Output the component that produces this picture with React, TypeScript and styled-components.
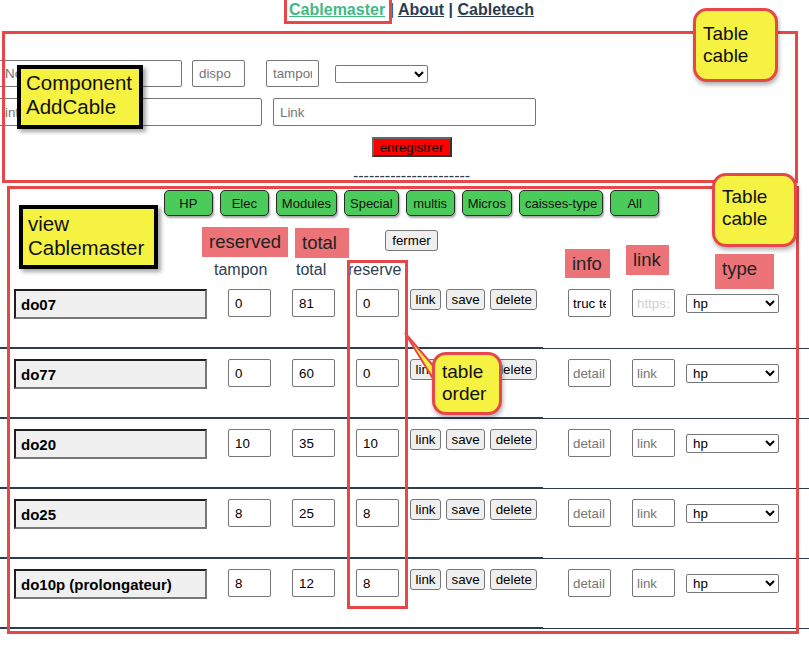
import React from 'react';
import styled, { createGlobalStyle } from 'styled-components';

const colors = {
  text: '#2c3e50',
  active: '#42b983',
  mark: '#e8474a',
  note: '#f5f242',
  tag: '#ec7478',
  filter: '#4bcb59',
  field: '#767676',
};

const GlobalStyle = createGlobalStyle`
  html, body {
    margin: 0;
    padding: 0;
    background: #fff;
  }
  body {
    font-family: 'Liberation Sans', Arial, Helvetica, sans-serif;
    color: ${colors.text};
  }
  input, select, button {
    font-family: 'Liberation Sans', Arial, Helvetica, sans-serif;
  }
`;

interface Cable {
  name: string;
  tampon: number;
  total: number;
  reserve: number;
  info?: string;
}

const cables: Cable[] = [
  { name: 'do07', tampon: 0, total: 81, reserve: 0, info: 'truc test' },
  { name: 'do77', tampon: 0, total: 60, reserve: 0 },
  { name: 'do20', tampon: 10, total: 35, reserve: 10 },
  { name: 'do25', tampon: 8, total: 25, reserve: 8 },
  { name: 'do10p (prolongateur)', tampon: 8, total: 12, reserve: 8 },
];

const filters = ['HP', 'Elec', 'Modules', 'Special', 'multis', 'Micros', 'caisses-type', 'All'];

const App = () => (
  <Page>
    <GlobalStyle />
    <Nav>
      <NavLink $active>Cablemaster</NavLink> | <NavLink>About</NavLink> | <NavLink>Cabletech</NavLink>
    </Nav>

    <AddCableForm>
      <FormRow $mt={36}>
        <Field $w={184} $h={27} $ml={-2} placeholder="Nom" />
        <Field $w={53} $h={27} $ml={10} placeholder="dispo" />
        <Field $w={53} $h={27} $ml={21} placeholder="tampon" />
        <TypeSelect $w={93} $h={18} $ml={16} defaultValue="">
          <option value="" />
          <option value="hp">hp</option>
        </TypeSelect>
      </FormRow>
      <FormRow $mt={11}>
        <Field $w={264} $h={28} $ml={-2} placeholder="info" />
        <Field $w={263} $h={28} $ml={11} placeholder="Link" />
      </FormRow>
      <Centered $mt={11}>
        <SaveButton>enregistrer</SaveButton>
      </Centered>
      <Dashes>----------------------</Dashes>
    </AddCableForm>

    <Centered $mt={5} $gap={7}>
      {filters.map((f) => (
        <FilterButton key={f}>{f}</FilterButton>
      ))}
    </Centered>
    <Centered $mt={14}>
      <GreyButton>fermer</GreyButton>
    </Centered>

    <ColumnHeads>
      <HeadLabel $w={82}>tampon</HeadLabel>
      <HeadLabel $w={52}>total</HeadLabel>
      <HeadLabel $w={60}>reserve</HeadLabel>
    </ColumnHeads>

    {cables.map((c, i) => (
      <CableRow key={c.name}>
        <MainCell>
          <NameField defaultValue={c.name} />
          <NumberField defaultValue={c.tampon} />
          <NumberField defaultValue={c.total} />
          <NumberField defaultValue={c.reserve} />
          <RowActions>
            <GreyButton $tight>link</GreyButton>
            <GreyButton $tight>save</GreyButton>
            <GreyButton $tight>delete</GreyButton>
          </RowActions>
        </MainCell>
        <ExtraCell>
          <Field $w={43} $h={28} $pad={4} defaultValue={c.info} placeholder="detail" />
          <Field $w={43} $h={28} $pad={4} $ml={21} $faint={i === 0} placeholder={i === 0 ? 'https://' : 'link'} />
          <TypeSelect $w={93} $h={19} $ml={11} $mt={5} defaultValue="hp">
            <option value="hp">hp</option>
            <option value="elec">elec</option>
          </TypeSelect>
        </ExtraCell>
      </CableRow>
    ))}

    {/* annotations drawn over the page */}
    <Outline $x={284} $y={-3} $w={108} $h={27} />
    <Outline $x={2} $y={31} $w={796} $h={152} />
    <Outline $x={7} $y={186} $w={792} $h={448} />
    <Outline $x={347} $y={260} $w={61} $h={349} />

    <Note $x={17} $y={65} $w={126} $h={64}>Component<br />AddCable</Note>
    <Note $x={19} $y={205} $w={139} $h={64} $pt={3}>view<br />Cablemaster</Note>

    <Bubble $x={693} $y={8} $w={85} $h={74} $pt={12}>Table<br />cable</Bubble>
    <Bubble $x={712} $y={173} $w={85} $h={74} $pt={10}>Table<br />cable</Bubble>

    <Pointer width="45" height="70" viewBox="0 0 45 70">
      <polygon points="5,6 36,42 37,58" fill={colors.note} stroke={colors.mark} strokeWidth="2" />
    </Pointer>
    <Bubble $x={432} $y={352} $w={70} $h={63} $pt={6}>table<br />order</Bubble>

    <Tag $x={202} $y={227} $w={86} $h={30}>reserved</Tag>
    <Tag $x={295} $y={228} $w={54} $h={30}>total</Tag>
    <Tag $x={565} $y={249} $w={45} $h={29}>info</Tag>
    <Tag $x={626} $y={245} $w={43} $h={30}>link</Tag>
    <Tag $x={715} $y={254} $w={59} $h={35}>type</Tag>
  </Page>
);

const Page = styled.div`
  position: relative;
  width: 809px;
  height: 669px;
  overflow: hidden;
`;

const Nav = styled.div`
  height: 24px;
  padding-left: 14px;
  text-align: center;
  font-size: 16px;
  line-height: 20px;
  font-weight: bold;
  color: ${colors.text};
`;

const NavLink = styled.a<{ $active?: boolean }>`
  color: ${(p) => (p.$active ? colors.active : colors.text)};
  text-decoration: underline;
`;

const AddCableForm = styled.div`
  display: flex;
  flex-direction: column;
`;

const FormRow = styled.div<{ $mt: number }>`
  display: flex;
  align-items: center;
  margin-top: ${(p) => p.$mt}px;
`;

const Field = styled.input<{ $w: number; $h: number; $ml?: number; $pad?: number; $faint?: boolean }>`
  box-sizing: border-box;
  width: ${(p) => p.$w}px;
  height: ${(p) => p.$h}px;
  margin: 0 0 0 ${(p) => p.$ml ?? 0}px;
  flex-shrink: 0;
  padding: 0 ${(p) => p.$pad ?? 6}px;
  border: 1px solid ${colors.field};
  border-radius: 2px;
  background: #fff;
  font-size: 13.33px;
  color: #000;
  &::placeholder {
    color: ${(p) => (p.$faint ? '#cfcfcf' : '#757575')};
  }
`;

const TypeSelect = styled.select<{ $w: number; $h: number; $ml?: number; $mt?: number }>`
  box-sizing: border-box;
  width: ${(p) => p.$w}px;
  height: ${(p) => p.$h}px;
  margin: ${(p) => p.$mt ?? 0}px 0 0 ${(p) => p.$ml ?? 0}px;
  flex-shrink: 0;
  padding: 0 2px;
  border: 1px solid ${colors.field};
  border-radius: 2px;
  background: #fff;
  font-size: 13.33px;
  color: #000;
`;

const Centered = styled.div<{ $mt: number; $gap?: number }>`
  display: flex;
  justify-content: center;
  gap: ${(p) => p.$gap ?? 0}px;
  padding-left: 14px;
  margin-top: ${(p) => p.$mt}px;
`;

const SaveButton = styled.button`
  box-sizing: border-box;
  width: 80px;
  height: 20px;
  padding: 0;
  background: #ff0000;
  border: 2px solid;
  border-color: #666 #333 #333 #666;
  font-size: 13.33px;
  color: #000;
`;

const Dashes = styled.div`
  margin-top: 10px;
  padding-left: 14px;
  height: 18px;
  text-align: center;
  font-size: 16px;
  line-height: 18px;
  color: ${colors.text};
`;

const FilterButton = styled.button`
  box-sizing: border-box;
  height: 26px;
  min-width: 49px;
  padding: 0 5px;
  background: ${colors.filter};
  border: 1px solid #2a2a2a;
  border-radius: 5px;
  box-shadow: 1px 2px 2px rgba(0, 0, 0, 0.35);
  font-size: 13px;
  color: #111;
`;

const GreyButton = styled.button<{ $tight?: boolean }>`
  box-sizing: border-box;
  height: 21px;
  padding: 0 ${(p) => (p.$tight ? 4.5 : 6)}px;
  background: #efefef;
  border: 1px solid ${colors.field};
  border-radius: 3px;
  font-size: 13.33px;
  color: #000;
`;

const ColumnHeads = styled.div`
  display: flex;
  margin-top: 10px;
  padding-left: 214px;
  height: 18px;
  font-size: 16px;
  line-height: 18px;
  color: ${colors.text};
`;

const HeadLabel = styled.div<{ $w: number }>`
  width: ${(p) => p.$w}px;
`;

const CableRow = styled.div`
  display: flex;
`;

const MainCell = styled.div`
  box-sizing: border-box;
  width: 543px;
  flex-shrink: 0;
  display: flex;
  align-items: flex-start;
  gap: 21px;
  padding: 10px 0 28px 14px;
  border-bottom: 2px solid ${colors.text};
`;

const ExtraCell = styled.div`
  flex: 1;
  display: flex;
  align-items: flex-start;
  padding: 10px 0 0 25px;
  border-bottom: 1px solid ${colors.text};
`;

const NameField = styled.input`
  box-sizing: border-box;
  width: 193px;
  height: 30px;
  margin: 0;
  padding: 0 5px;
  background: #f0f0f0;
  border: 2px solid;
  border-color: #1e1e1e #777 #777 #1e1e1e;
  font-size: 15px;
  font-weight: bold;
  color: #000;
`;

const NumberField = styled.input`
  box-sizing: border-box;
  width: 43px;
  height: 28px;
  margin: 0;
  padding: 0 6px;
  border: 1px solid ${colors.field};
  border-radius: 2px;
  font-size: 13.33px;
  color: #000;
`;

const RowActions = styled.div`
  display: flex;
  gap: 5px;
  margin-left: -10px;
`;

const Outline = styled.div<{ $x: number; $y: number; $w: number; $h: number }>`
  position: absolute;
  left: ${(p) => p.$x}px;
  top: ${(p) => p.$y}px;
  width: ${(p) => p.$w}px;
  height: ${(p) => p.$h}px;
  box-sizing: border-box;
  border: 3px solid ${colors.mark};
  pointer-events: none;
`;

const Note = styled.div<{ $x: number; $y: number; $w: number; $h: number; $pt?: number }>`
  position: absolute;
  left: ${(p) => p.$x}px;
  top: ${(p) => p.$y}px;
  width: ${(p) => p.$w}px;
  height: ${(p) => p.$h}px;
  box-sizing: border-box;
  padding: ${(p) => p.$pt ?? 2}px 5px 0;
  background: ${colors.note};
  border: 4px solid #000;
  box-shadow: 3px 3px 4px rgba(0, 0, 0, 0.35);
  font-size: 20.5px;
  line-height: 24px;
  color: #111;
`;

const Bubble = styled.div<{ $x: number; $y: number; $w: number; $h: number; $pt: number }>`
  position: absolute;
  left: ${(p) => p.$x}px;
  top: ${(p) => p.$y}px;
  width: ${(p) => p.$w}px;
  height: ${(p) => p.$h}px;
  box-sizing: border-box;
  padding: ${(p) => p.$pt}px 7px 0;
  background: ${colors.note};
  border: 3px solid ${colors.mark};
  border-radius: 14px;
  box-shadow: 1px 3px 4px rgba(0, 0, 0, 0.3);
  font-size: 19px;
  line-height: 22px;
  color: #111;
`;

const Pointer = styled.svg`
  position: absolute;
  left: 400px;
  top: 327px;
  overflow: visible;
`;

const Tag = styled.div<{ $x: number; $y: number; $w: number; $h: number }>`
  position: absolute;
  left: ${(p) => p.$x}px;
  top: ${(p) => p.$y}px;
  width: ${(p) => p.$w}px;
  height: ${(p) => p.$h}px;
  box-sizing: border-box;
  padding-left: 7px;
  background: ${colors.tag};
  font-size: 18.5px;
  line-height: 30px;
  color: #222;
`;

export default App;
